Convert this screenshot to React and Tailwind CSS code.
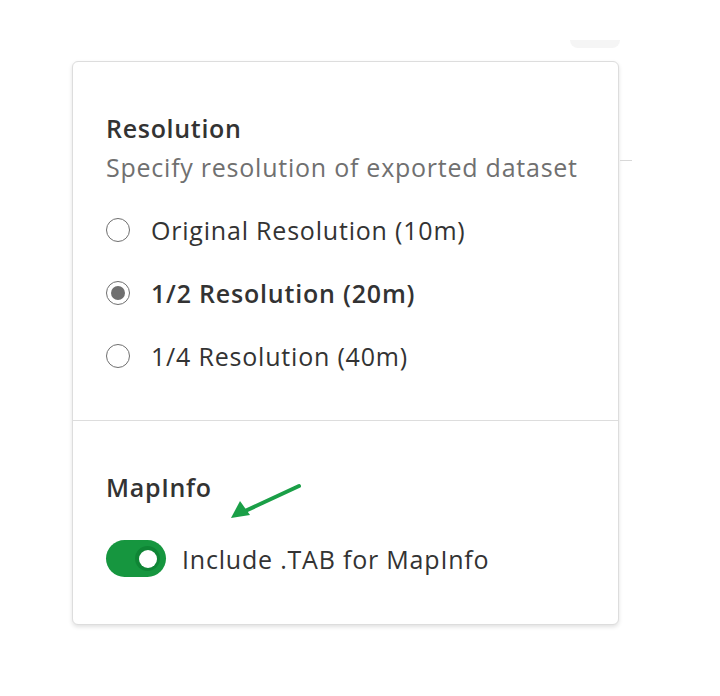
import React from "react";

function Radio({ checked, label }) {
  return (
    <div className="flex items-center h-[32px]">
      <span className="w-[24px] h-[24px] rounded-full border-[1.5px] border-[#6f6f6f] flex items-center justify-center bg-white">
        {checked && <span className="w-[14px] h-[14px] rounded-full bg-[#6f6f6f]" />}
      </span>
      <span className={"ml-[21px] text-[25px] leading-[32px] tracking-[0.8px] text-[#333333] " + (checked ? "font-semibold" : "")}>{label}</span>
    </div>
  );
}

export default function App() {
  return (
    <div className="w-[720px] h-[696px] bg-white" style={{ fontFamily: "'Open Sans', 'Noto Sans', sans-serif" }}>
      <div className="w-[547px] ml-[72px] h-[48px] flex justify-end">
        <div className="w-[50px] h-[8px] mt-[40px] mr-[-1px] rounded-b-[10px] bg-[#f5f5f5]" />
      </div>
      <div className="relative mt-[13px] ml-[72px] w-[547px] h-[564px] rounded-[6px] border border-[#dddddd] bg-white shadow-[0_2px_4px_rgba(0,0,0,0.12)] flex flex-col">
        <div className="absolute left-[547px] top-[98px] w-[12px] h-[1px] bg-[#d8d8d8]" />
        <div className="h-[359px] border-b border-[#dddddd] pl-[33px] pt-[50px]">
          <div className="text-[25px] leading-[32px] tracking-[0.7px] font-semibold text-[#333333]">Resolution</div>
          <div className="mt-[7px] text-[25px] leading-[32px] tracking-[0.76px] text-[#707070]">Specify resolution of exported dataset</div>
          <div className="mt-[31px] flex flex-col gap-[31px]">
            <Radio label="Original Resolution (10m)" />
            <Radio checked label="1/2 Resolution (20m)" />
            <Radio label="1/4 Resolution (40m)" />
          </div>
        </div>
        <div className="relative pl-[33px] pt-[50px]">
          <div className="text-[25px] leading-[32px] tracking-[0.7px] font-semibold text-[#333333]">MapInfo</div>
          <svg className="absolute left-[154px] top-[60px]" width="80" height="42" viewBox="0 0 80 42">
            <line x1="72" y1="5" x2="16" y2="31" stroke="#1a9f47" strokeWidth="4" strokeLinecap="round" />
            <polygon points="4,37 13,20 23,34" fill="#1a9f47" />
          </svg>
          <div className="mt-[37px] flex items-center">
            <div className="w-[60px] h-[37px] rounded-full bg-[#16963f] flex items-center justify-end pr-[6px]">
              <div className="w-[25px] h-[25px] rounded-full bg-[#0f8535] flex items-center justify-center">
                <div className="w-[18px] h-[18px] rounded-full bg-white" />
              </div>
            </div>
            <span className="ml-[16px] text-[25px] leading-[32px] tracking-[0.8px] text-[#333333]">Include .TAB for MapInfo</span>
          </div>
        </div>
      </div>
    </div>
  );
}
